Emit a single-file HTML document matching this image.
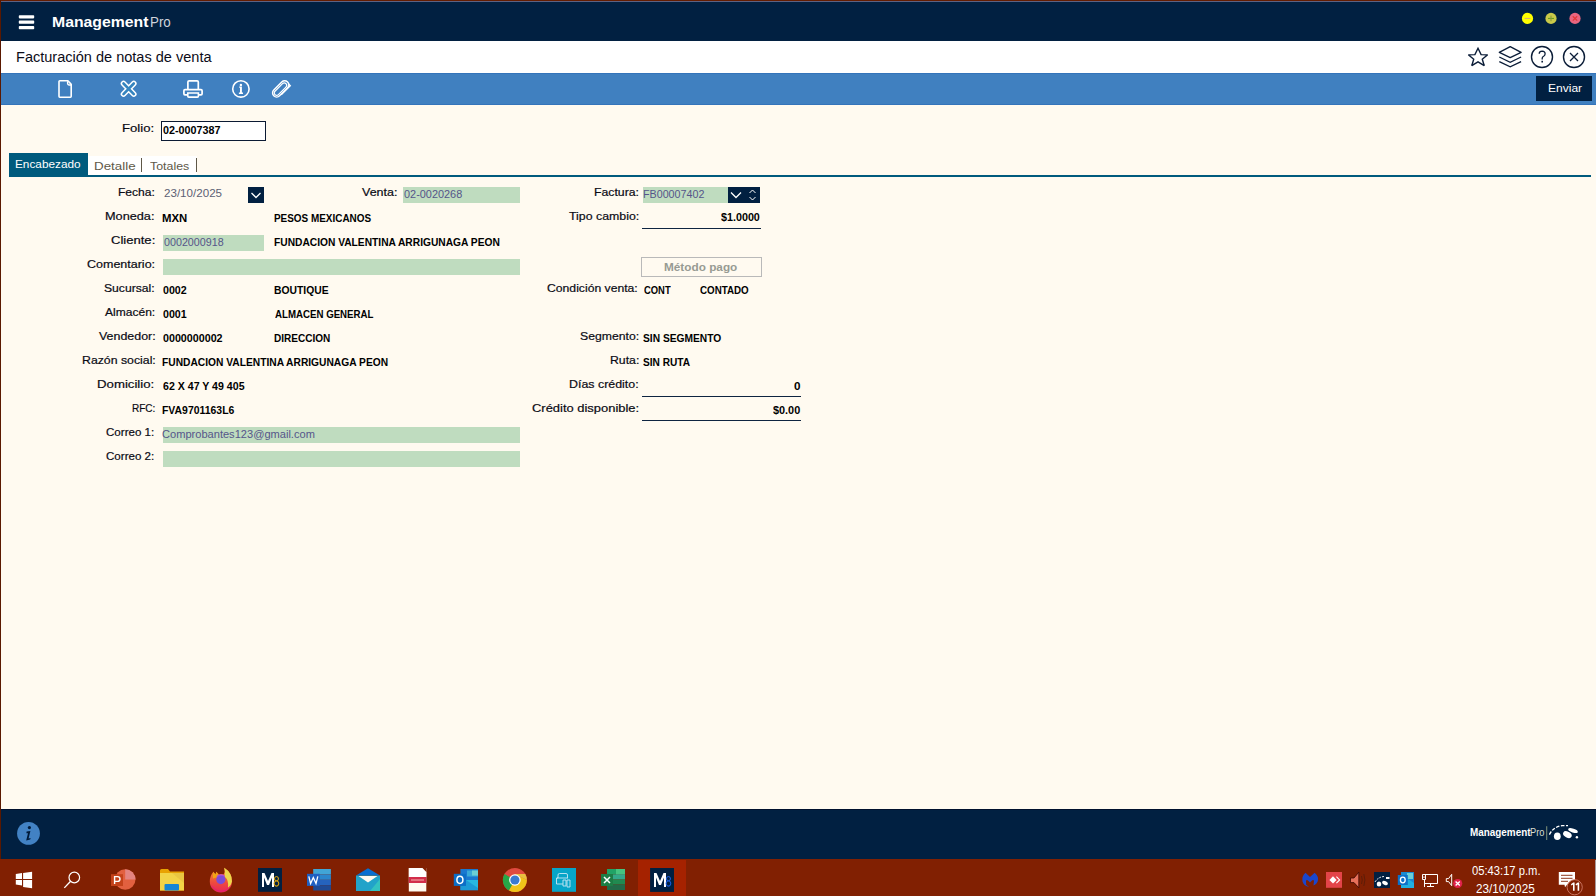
<!DOCTYPE html>
<html><head><meta charset="utf-8"><style>
html,body{margin:0;padding:0;}
body{width:1596px;height:896px;overflow:hidden;position:relative;background:#fffaf0;font-family:'Liberation Sans', sans-serif;}
.r{position:absolute;}
.t{position:absolute;white-space:nowrap;transform-origin:0 0;}
</style></head><body>
<div class="r" style="left:0px;top:0px;width:1596px;height:41px;background:#012041;"></div>
<div class="r" style="left:0px;top:0px;width:1596px;height:1px;background:#641c00;"></div>
<div class="r" style="left:0px;top:1px;width:1596px;height:1px;background:#5d6283;"></div>
<div class="r" style="left:0px;top:41px;width:1596px;height:32px;background:#ffffff;"></div>
<div class="r" style="left:0px;top:73px;width:1596px;height:32px;background:#4080c0;"></div>
<div class="r" style="left:0px;top:73px;width:1596px;height:1px;background:#3474ba;"></div>
<div class="r" style="left:0px;top:104px;width:1596px;height:1px;background:#3474ba;"></div>
<div class="r" style="left:0px;top:809px;width:1596px;height:50px;background:#012041;"></div>
<div class="r" style="left:0px;top:809px;width:1596px;height:1px;background:#00102e;"></div>
<div class="r" style="left:0px;top:859px;width:1596px;height:37px;background:#812002;"></div>
<div class="r" style="left:0px;top:0px;width:1px;height:859px;background:#5a1800;"></div>
<div class="r" style="left:638px;top:860px;width:48px;height:36px;background:#a52200;"></div>
<div class="r" style="left:1536px;top:76px;width:56px;height:25px;background:#012041;"></div>
<div class="r" style="left:161px;top:121px;width:105px;height:20px;background:#ffffff;box-sizing:border-box;border:1px solid #0b1a33;"></div>
<div class="r" style="left:88px;top:156px;width:109px;height:19px;background:#ffffff;"></div>
<div class="r" style="left:9px;top:153px;width:79px;height:22px;background:#005a7d;"></div>
<div class="r" style="left:9px;top:175px;width:1582px;height:2px;background:#005a7d;"></div>
<div class="r" style="left:141px;top:158px;width:1px;height:14px;background:#5e5848;"></div>
<div class="r" style="left:196px;top:158px;width:1px;height:14px;background:#5e5848;"></div>
<div class="r" style="left:403px;top:187px;width:117px;height:16px;background:#bfdcbf;"></div>
<div class="r" style="left:643px;top:187px;width:85px;height:16px;background:#bfdcbf;"></div>
<div class="r" style="left:163px;top:235px;width:101px;height:16px;background:#bfdcbf;"></div>
<div class="r" style="left:163px;top:259px;width:357px;height:16px;background:#bfdcbf;"></div>
<div class="r" style="left:163px;top:427px;width:357px;height:16px;background:#bfdcbf;"></div>
<div class="r" style="left:163px;top:451px;width:357px;height:16px;background:#bfdcbf;"></div>
<div class="r" style="left:248px;top:187px;width:16px;height:16px;background:#012041;"></div>
<svg class="r" style="left:248px;top:187px" width="16" height="16"><polyline points="3.5,6 8,10.5 12.5,6" fill="none" stroke="#fff" stroke-width="1.3"/></svg>
<div class="r" style="left:728px;top:187px;width:32px;height:16px;background:#012041;"></div>
<svg class="r" style="left:728px;top:187px" width="32" height="16"><polyline points="3,5.5 8,10.5 13,5.5" fill="none" stroke="#fff" stroke-width="1.3"/><polyline points="21.5,6 24.5,3 27.5,6" fill="none" stroke="#fff" stroke-width="1"/><polyline points="21.5,10 24.5,13 27.5,10" fill="none" stroke="#fff" stroke-width="1"/></svg>
<div class="r" style="left:642px;top:228px;width:119px;height:1px;background:#0e2440;"></div>
<div class="r" style="left:642px;top:396px;width:159px;height:1px;background:#0e2440;"></div>
<div class="r" style="left:642px;top:420px;width:159px;height:1px;background:#0e2440;"></div>
<div class="r" style="left:641px;top:257px;width:121px;height:20px;background:transparent;box-sizing:border-box;border:1px solid #b9b9b9;"></div>
<svg class="r" style="left:0;top:0" width="1596" height="896" viewBox="0 0 1596 896"><rect x="18.8" y="15.2" width="15.4" height="3.2" rx="0.8" fill="#fff"/><rect x="18.8" y="20.6" width="15.4" height="3.2" rx="0.8" fill="#fff"/><rect x="18.8" y="26.0" width="15.4" height="3.2" rx="0.8" fill="#fff"/><circle cx="1527.5" cy="18.4" r="5.6" fill="#ffff00"/><rect x="1524.6" y="17.9" width="5.8" height="1.1" fill="#d8b070"/><circle cx="1551" cy="18.4" r="5.6" fill="#c9c949"/><rect x="1548" y="17.9" width="6" height="1.1" fill="#6aa020"/><rect x="1550.45" y="15.6" width="1.1" height="5.6" fill="#8a9a40"/><circle cx="1575" cy="18.4" r="5.6" fill="#e9657f"/><path d="M1572.8,16.2 L1577.2,20.6 M1577.2,16.2 L1572.8,20.6" stroke="#e23a3a" stroke-width="1.3"/><g transform="translate(1478,57.8) scale(0.93) translate(-1478,-57.8)"><path d="M1478,47.6 L1481.3,54.4 L1488.4,54.6 L1482.6,59.3 L1484.7,66.3 L1478,62.2 L1471.3,66.3 L1473.4,59.3 L1467.6,54.6 L1474.7,54.4 Z" fill="none" stroke="#0b1d38" stroke-width="1.5" stroke-linejoin="miter" stroke-miterlimit="2.5"/></g><path d="M1499.3,52.4 L1510.2,46.6 L1521.1,52.4 L1510.2,57.6 Z" fill="none" stroke="#0b1d38" stroke-width="1.3" stroke-linejoin="round"/><path d="M1499.3,57.0 L1510.2,62.3 L1521.1,57.0 M1499.3,61.6 L1510.2,66.9 L1521.1,61.6" fill="none" stroke="#0b1d38" stroke-width="1.3"/><circle cx="1542" cy="57" r="10.5" fill="none" stroke="#0b1d38" stroke-width="1.4"/><path d="M1539.2,53.8 Q1539.3,51.2 1542.2,51.2 Q1545.2,51.3 1545.1,53.9 Q1545,55.6 1543.3,56.5 Q1542.2,57.1 1542.2,58.6 L1542.2,59.4" fill="none" stroke="#0b1d38" stroke-width="1.3"/><rect x="1541.4" y="60.8" width="1.6" height="1.7" fill="#0b1d38"/><circle cx="1574" cy="57" r="10.5" fill="none" stroke="#0b1d38" stroke-width="1.4"/><path d="M1570,53 L1578,61 M1578,53 L1570,61" stroke="#0b1d38" stroke-width="1.3"/><path d="M59,81.6 Q59,80.8 59.8,80.8 L67.9,80.8 L71.2,84.4 L71.2,96.3 Q71.2,97.2 70.4,97.2 L59.8,97.2 Q59,97.2 59,96.3 Z" fill="none" stroke="#fff" stroke-width="1.6" stroke-linejoin="round"/><path d="M67.6,81.2 L67.6,83.6 Q67.6,85 69,85 L71,85" fill="none" stroke="#fff" stroke-width="1.4"/><path d="M123.5,83.5 L133.8,94.1 M133.8,83.5 L123.5,94.1" stroke="#fff" stroke-width="5.6" stroke-linecap="round"/><path d="M123.5,83.5 L133.8,94.1 M133.8,83.5 L123.5,94.1" stroke="#3584bf" stroke-width="2.6" stroke-linecap="round"/><path d="M187.9,89 L187.9,82 Q187.9,80.8 189.1,80.8 L197.1,80.8 Q198.3,80.8 198.3,82 L198.3,89" fill="none" stroke="#fff" stroke-width="1.7"/><path d="M188,89.6 L185,89.6 Q183.9,89.6 183.9,90.8 L183.9,93.8 Q183.9,94.8 185,94.8 L188,94.8 M198.2,89.6 L201,89.6 Q202.1,89.6 202.1,90.8 L202.1,93.8 Q202.1,94.8 201,94.8 L198.2,94.8 M188,89.6 L198.2,89.6" fill="none" stroke="#fff" stroke-width="1.7"/><path d="M187.8,93 L198.4,93 L198.4,96.2 Q198.4,97.1 197.4,97.1 L188.8,97.1 Q187.8,97.1 187.8,96.2 Z" fill="none" stroke="#fff" stroke-width="1.6"/><circle cx="240.9" cy="88.9" r="8.2" fill="none" stroke="#fff" stroke-width="1.6"/><circle cx="240.9" cy="84.9" r="1.2" fill="#fff"/><path d="M239.2,86.6 L241.9,86.6 L241.9,92.6 L243,92.6 L243,93.9 L238.9,93.9 L238.9,92.6 L240,92.6 L240,87.7 L239.2,87.7 Z" fill="#fff"/><g transform="translate(281,88.9) rotate(-45)" fill="none" stroke="#fff"><rect x="-10" y="-4.3" width="19.5" height="8.2" rx="4.1" stroke-width="1.5"/><rect x="-8.3" y="-2.6" width="15.5" height="4.8" rx="2.4" stroke-width="1.2"/><path d="M-4,4.3 L8.8,4.3 L8.8,2" stroke-width="1.4"/></g><circle cx="28.5" cy="833.4" r="11.4" fill="#4282c4"/><circle cx="29.4" cy="827.6" r="1.6" fill="#001a38"/><path d="M26.6,831.6 L30.4,831 L28.6,838.6 L30.6,838 L30.2,839.6 L26.2,840.4 L28,833.2 L26.4,833.2 Z" fill="#001a38"/><rect x="1546.3" y="826.2" width="0.9" height="13.8" fill="#8fa080"/><g fill="#fff"><ellipse cx="1557.3" cy="836.3" rx="3.4" ry="3.8"/><ellipse cx="1567.4" cy="834.6" rx="4.6" ry="2.9" transform="rotate(28 1567.4 834.6)"/><ellipse cx="1573" cy="830.6" rx="5" ry="1.9" transform="rotate(18 1573 830.6)"/><circle cx="1576.9" cy="837.3" r="1.2"/></g><path d="M1549.4,834.6 Q1553,827 1562,825.6 L1568,825.6" fill="none" stroke="#fff" stroke-width="1.3" stroke-dasharray="3.5 1.5"/><path d="M15.8,873.9 L22,873 L22,878.9 L15.8,878.9 Z M23.1,872.9 L32.1,871.7 L32.1,878.9 L23.1,878.9 Z M15.8,880 L22,880 L22,885.5 L15.8,884.6 Z M23.1,880 L32.1,880 L32.1,888.2 L23.1,887 Z" fill="#fff"/><circle cx="74.3" cy="877.5" r="5.3" fill="none" stroke="#fff" stroke-width="1.2"/><path d="M70.6,881.3 L64.3,887.9" stroke="#fff" stroke-width="1.3"/><circle cx="125.2" cy="879.5" r="10.3" fill="#e2603f"/><path d="M125.2,879.5 L125.2,869.2 A10.3,10.3 0 0 1 135.5,879.5 Z" fill="#e48480"/><rect x="111" y="874.2" width="12" height="11.8" fill="#c4421a"/><path d="M114.6,884 L114.6,876.6 L117.6,876.6 Q120,876.6 120,879 Q120,881.4 117.6,881.4 L114.6,881.4" fill="none" stroke="#fff" stroke-width="1.4"/><path d="M160,870.5 Q160,869 161.5,869 L168,869 L170,871.5 L184,871.5 L184,890.5 L160,890.5 Z" fill="#e8a202"/><rect x="160" y="873" width="24" height="17.5" fill="#f2d347"/><path d="M160,873 L172,873 L184,883 L184,873 Z" fill="#e6c040" opacity="0.7"/><rect x="164.5" y="884" width="14.5" height="6.5" rx="1" fill="#1585d4"/><defs><linearGradient id="ffg" x1="0" y1="0" x2="0" y2="1"><stop offset="0" stop-color="#f59a2a"/><stop offset="0.6" stop-color="#ee4a3e"/><stop offset="1" stop-color="#e8245a"/></linearGradient></defs><path d="M209.8,881.5 A11.1,11.1 0 0 0 232,881.5 Q232.2,873 224.2,867.8 Q225.5,872 223.5,874.5 Q221,873.6 219,874.6 L216.4,871.8 L215.4,874.6 L213.4,871.8 Q209.8,876 209.8,881.5 Z" fill="url(#ffg)"/><path d="M224.2,867.8 Q232.2,873 232,881.5 Q231,886 228,888 Q229,880 224.5,876.5 Q225.6,872 224.2,867.8 Z" fill="#ecd84a"/><path d="M213.4,871.8 L215.4,874.6 L216.4,871.8 L219.4,876.6 L213,878.6 Q212.6,875 213.4,871.8 Z" fill="#f2a414"/><circle cx="220.8" cy="879.6" r="4.6" fill="#7b4ed6"/><path d="M217,876.5 Q220,873.6 224.5,876" fill="none" stroke="#b04ad8" stroke-width="1.4"/><path d="M211.5,886 Q216,891.5 221,891.3 Q226,891.5 230,887" fill="none" stroke="#e01c78" stroke-width="0.9"/><rect x="258" y="868" width="24" height="23.8" fill="#012041"/><path d="M262,887 L262,873 L264.5,873 L268,881 L271.5,873 L274,873 L274,887 L272,887 L272,877.5 L269,885 L267,885 L264,877.5 L264,887 Z" fill="#fff"/><path d="M276.4,876.5 a2,2.2 0 1 0 0.1,0 M276.4,880.9 a2.3,2.6 0 1 0 0.1,0" fill="none" stroke="#d6a010" stroke-width="1.1"/><rect x="313.2" y="869" width="17.7" height="5.4" fill="#41a5d6"/><rect x="313.2" y="874.4" width="17.7" height="5.4" fill="#2b86cc"/><rect x="313.2" y="879.8" width="17.7" height="5.4" fill="#2563bd"/><rect x="313.2" y="885.2" width="17.7" height="5.3" fill="#1f4a94"/><rect x="307" y="873.8" width="12.7" height="12.1" fill="#1f5fc2"/><path d="M308.8,876.4 L310.6,883.6 L313.3,877.6 L316,883.6 L317.8,876.4" fill="none" stroke="#fff" stroke-width="1.3"/><path d="M356,875.5 L368,868.3 L380,875.5 Z" fill="#0a6fd0"/><rect x="356" y="875.5" width="24" height="15.5" fill="#22a3c9"/><path d="M380,879 L380,891 L370,891 Z" fill="#33c2c0"/><path d="M358.5,876 L377.5,876 L368,882.6 Z" fill="#fffaf0"/><path d="M408.8,868.1 L422.5,868.1 L426.3,872 L426.3,891.4 L408.8,891.4 Z" fill="#fffaf0"/><rect x="408.8" y="868.1" width="17.5" height="8.9" fill="#ffffff"/><path d="M422.5,868.1 L426.3,872 L426.3,868.1 Z" fill="#812002"/><rect x="408.8" y="877" width="17.5" height="6" fill="#d22d4a"/><rect x="411" y="879.4" width="13" height="1.2" fill="#f0a0a0"/><rect x="460.4" y="869" width="17.6" height="21.2" fill="#1a78d0"/><rect x="467" y="870.5" width="11" height="6" fill="#38a8d8"/><rect x="472" y="870.5" width="6" height="5" fill="#6ccfd4"/><path d="M460.4,880 L478,880 L478,890.2 L460.4,890.2 Z" fill="#1c9ad6"/><path d="M466,880 L478,888 L478,880 Z" fill="#28b8e0"/><rect x="453.8" y="873.8" width="12.2" height="12.1" fill="#0c6ec6"/><ellipse cx="459.9" cy="879.8" rx="3" ry="3.6" fill="none" stroke="#fff" stroke-width="1.5"/><circle cx="514.9" cy="880" r="12" fill="#e04a3f"/><path d="M514.9,880 L504.5,874 A12,12 0 0 0 509,890.5 Z" fill="#27a847"/><path d="M514.9,880 L509,890.5 A12,12 0 0 0 526.9,880 L514.9,874 Z" fill="#f0c419"/><path d="M514.9,874 L525.3,874 A12,12 0 0 1 526.9,880 Z" fill="#e8c040"/><circle cx="514.9" cy="880" r="5.8" fill="#fff"/><circle cx="514.9" cy="880" r="4.6" fill="#3a7ad0"/><rect x="552" y="868" width="24" height="23.8" fill="#07a5c8"/><path d="M558,878 L558,875 Q558,873.5 559.5,873.5 L566,873.5 Q567.5,873.5 567.5,875 L567.5,878 M557,878 L568,878 M558,878 L556.5,878 L556.5,884 L563,884 M563,880 L566,880 L566,886 L563,886 Z M567,880 L570,880 L570,887 L567,887 Z" fill="none" stroke="#c8e8f4" stroke-width="0.9"/><rect x="607" y="869" width="18" height="5.5" fill="#21a366"/><rect x="616" y="869" width="9" height="5.5" fill="#45c480"/><rect x="607" y="874.5" width="18" height="5" fill="#33a98a"/><rect x="607" y="879.5" width="18" height="5" fill="#208a50"/><rect x="607" y="884.5" width="18" height="5.5" fill="#226a48"/><rect x="601" y="874" width="12" height="12" fill="#1d7d45"/><path d="M604,877 L610,883 M610,877 L604,883" stroke="#fff" stroke-width="1.5"/><rect x="650.1" y="868" width="23.9" height="23.9" fill="#012041"/><path d="M654,887 L654,873 L656.5,873 L660,881 L663.5,873 L666,873 L666,887 L664,887 L664,877.5 L661,885 L659,885 L656,877.5 L656,887 Z" fill="#fff"/><path d="M668.4,876.5 a2,2.2 0 1 0 0.1,0 M668.4,880.9 a2.3,2.6 0 1 0 0.1,0" fill="none" stroke="#1a5ad8" stroke-width="1.1"/><path d="M1305.5,872.7 L1310,877.1 L1314.6,872.7 Q1318.6,876 1318,880 Q1317.5,884 1313.5,885.4 L1314,880.6 Q1313,879.6 1312,880.6 L1310,882.6 L1308,880.6 Q1307,879.6 1306,880.6 L1306.2,884.8 Q1307.8,886 1309.2,887 Q1304,886.2 1302.5,881.5 Q1301.6,876 1305.5,872.7 Z" fill="#1a46cc"/><rect x="1326" y="872" width="16" height="15.8" fill="#e34448"/><path d="M1329.4,879.9 L1333,876.3 L1336.6,879.9 L1333,883.5 Z" fill="#fff"/><path d="M1336.4,876.6 L1339.6,879.9 L1336.4,883.2" fill="none" stroke="#fff" stroke-width="1.1"/><path d="M1350.5,878 L1354,878 L1358.8,872.2 L1358.8,887.8 L1354,882.6 L1350.5,882.6 Z" fill="#e6705a" stroke="#3a0800" stroke-width="0.8"/><path d="M1361.5,876 Q1363,880 1361.5,884 M1363.8,874 Q1366,880 1363.8,886" fill="none" stroke="#5a1c08" stroke-width="0.9"/><rect x="1374" y="872" width="16" height="16" fill="#012041"/><g fill="#fff"><ellipse cx="1379" cy="884" rx="2.3" ry="2.5"/><ellipse cx="1385" cy="883" rx="3" ry="1.9" transform="rotate(25 1385 883)"/><rect x="1386" y="877" width="3.5" height="2" /></g><path d="M1375,882 Q1378,877 1384,876.5" fill="none" stroke="#fff" stroke-width="0.9" stroke-dasharray="2 1"/><rect x="1401" y="872" width="13" height="16" fill="#1a8ad0"/><rect x="1407" y="873" width="6" height="6" fill="#6ccfd4"/><path d="M1408,879 L1414,883 L1414,888 L1401,888 L1401,881 Z" fill="#22b0e0"/><rect x="1397.8" y="875" width="10" height="10" fill="#0c70c8"/><ellipse cx="1402.8" cy="880" rx="2.4" ry="2.8" fill="none" stroke="#fff" stroke-width="1.3"/><path d="M1422.5,874.5 L1437.5,874.5 L1437.5,883.5 L1424.5,883.5 M1422.5,874.5 L1422.5,879.5 L1425.5,879.5 L1425.5,874.5 M1424.5,879.5 L1424.5,887 M1430.5,883.5 L1430.5,886.5 M1427,886.5 L1434,886.5 M1423.3,876.6 L1424,877.6 L1424.7,876.6" fill="none" stroke="#fff" stroke-width="1"/><path d="M1446.3,878.6 L1448.6,878.6 L1451.7,874.3 L1451.7,885.7 L1448.6,881.6 L1446.3,881.6 Z" fill="none" stroke="#fff" stroke-width="1"/><circle cx="1457.7" cy="883.5" r="4.6" fill="#e0204a"/><path d="M1455.6,881.4 L1459.8,885.6 M1459.8,881.4 L1455.6,885.6" stroke="#fff" stroke-width="1.35"/><path d="M1558.8,872 L1575,872 L1575,884.8 L1567,884.8 L1565,887.2 L1564.5,884.8 L1558.8,884.8 Z" fill="#fff"/><path d="M1561,875.3 L1572.5,875.3 M1561,878.3 L1572.5,878.3 M1561,881.3 L1568,881.3" stroke="#812002" stroke-width="0.9"/><circle cx="1574.7" cy="887.25" r="7.6" fill="#812002" stroke="#d07a68" stroke-width="0.9"/><path d="M1570.9,884.2 L1573.2,882.4 L1574.6,882.4 L1574.6,890.8 L1573,890.8 L1573,884.6 L1571.6,885.6 Z M1575.5,884.2 L1577.8,882.4 L1579.2,882.4 L1579.2,890.8 L1577.6,890.8 L1577.6,884.6 L1576.2,885.6 Z" fill="#fff"/><rect x="1595" y="860" width="1" height="36" fill="#a8989a"/></svg>
<div class="t" style="left:51.55px;top:14px;font-size:15px;line-height:15px;font-weight:bold;color:#ffffff;transform:scaleX(1.0527);">Management</div>
<div class="t" style="left:149.51px;top:14px;font-size:15px;line-height:15px;font-weight:normal;color:#d0d4dc;transform:scaleX(0.8909);">Pro</div>
<div class="t" style="left:16.16px;top:50px;font-size:14px;line-height:14px;font-weight:normal;color:#0c0c18;transform:scaleX(1.0380);">Facturación de notas de venta</div>
<div class="t" style="left:1547.55px;top:83px;font-size:11.5px;line-height:11.5px;font-weight:normal;color:#ffffff;transform:scaleX(1.0452);">Enviar</div>
<div class="t" style="left:122.33px;top:123px;font-size:11.2px;line-height:11.2px;font-weight:normal;color:#0a0a14;transform:scaleX(1.1731);-webkit-text-stroke:0.2px #0a0a14;">Folio:</div>
<div class="t" style="left:163.30px;top:125px;font-size:11px;line-height:11px;font-weight:bold;color:#000000;transform:scaleX(0.9776);">02-0007387</div>
<div class="t" style="left:15.20px;top:159px;font-size:11.2px;line-height:11.2px;font-weight:normal;color:#ffffff;transform:scaleX(1.0549);">Encabezado</div>
<div class="t" style="left:94.41px;top:161px;font-size:11.2px;line-height:11.2px;font-weight:normal;color:#5e5848;transform:scaleX(1.1939);">Detalle</div>
<div class="t" style="left:150.00px;top:161px;font-size:11.2px;line-height:11.2px;font-weight:normal;color:#5e5848;transform:scaleX(1.1071);">Totales</div>
<div class="t" style="left:118.42px;top:187px;font-size:11.2px;line-height:11.2px;font-weight:normal;color:#0a0a14;transform:scaleX(1.0781);-webkit-text-stroke:0.2px #0a0a14;">Fecha:</div>
<div class="t" style="left:105.16px;top:211px;font-size:11.2px;line-height:11.2px;font-weight:normal;color:#0a0a14;transform:scaleX(1.1357);-webkit-text-stroke:0.2px #0a0a14;">Moneda:</div>
<div class="t" style="left:110.83px;top:235px;font-size:11.2px;line-height:11.2px;font-weight:normal;color:#0a0a14;transform:scaleX(1.1667);-webkit-text-stroke:0.2px #0a0a14;">Cliente:</div>
<div class="t" style="left:86.98px;top:259px;font-size:11.2px;line-height:11.2px;font-weight:normal;color:#0a0a14;transform:scaleX(1.1169);-webkit-text-stroke:0.2px #0a0a14;">Comentario:</div>
<div class="t" style="left:104.01px;top:283px;font-size:11.2px;line-height:11.2px;font-weight:normal;color:#0a0a14;transform:scaleX(1.0867);-webkit-text-stroke:0.2px #0a0a14;">Sucursal:</div>
<div class="t" style="left:104.50px;top:307px;font-size:11.2px;line-height:11.2px;font-weight:normal;color:#0a0a14;transform:scaleX(1.0761);-webkit-text-stroke:0.2px #0a0a14;">Almacén:</div>
<div class="t" style="left:98.50px;top:331px;font-size:11.2px;line-height:11.2px;font-weight:normal;color:#0a0a14;transform:scaleX(1.1100);-webkit-text-stroke:0.2px #0a0a14;">Vendedor:</div>
<div class="t" style="left:81.50px;top:355px;font-size:11.2px;line-height:11.2px;font-weight:normal;color:#0a0a14;transform:scaleX(1.0985);-webkit-text-stroke:0.2px #0a0a14;">Razón social:</div>
<div class="t" style="left:97.32px;top:379px;font-size:11.2px;line-height:11.2px;font-weight:normal;color:#0a0a14;transform:scaleX(1.1809);-webkit-text-stroke:0.2px #0a0a14;">Domicilio:</div>
<div class="t" style="left:131.60px;top:403px;font-size:11.2px;line-height:11.2px;font-weight:normal;color:#0a0a14;transform:scaleX(0.8958);-webkit-text-stroke:0.2px #0a0a14;">RFC:</div>
<div class="t" style="left:106.47px;top:427px;font-size:11.2px;line-height:11.2px;font-weight:normal;color:#0a0a14;transform:scaleX(1.0333);-webkit-text-stroke:0.2px #0a0a14;">Correo 1:</div>
<div class="t" style="left:106.47px;top:451px;font-size:11.2px;line-height:11.2px;font-weight:normal;color:#0a0a14;transform:scaleX(1.0333);-webkit-text-stroke:0.2px #0a0a14;">Correo 2:</div>
<div class="t" style="left:163.96px;top:188px;font-size:11.2px;line-height:11.2px;font-weight:normal;color:#5d5f74;transform:scaleX(1.0364);">23/10/2025</div>
<div class="t" style="left:162.25px;top:213px;font-size:10.8px;line-height:10.8px;font-weight:bold;color:#000000;transform:scaleX(1.0522);">MXN</div>
<div class="t" style="left:274.18px;top:213px;font-size:10.8px;line-height:10.8px;font-weight:bold;color:#000000;transform:scaleX(0.9192);">PESOS MEXICANOS</div>
<div class="t" style="left:163.50px;top:237px;font-size:11.2px;line-height:11.2px;font-weight:normal;color:#55558a;transform:scaleX(0.9581);">0002000918</div>
<div class="t" style="left:274.05px;top:237px;font-size:10.8px;line-height:10.8px;font-weight:bold;color:#000000;transform:scaleX(0.9468);">FUNDACION VALENTINA ARRIGUNAGA PEON</div>
<div class="t" style="left:163.20px;top:285px;font-size:10.8px;line-height:10.8px;font-weight:bold;color:#000000;transform:scaleX(0.9875);">0002</div>
<div class="t" style="left:274.04px;top:285px;font-size:10.8px;line-height:10.8px;font-weight:bold;color:#000000;transform:scaleX(0.9571);">BOUTIQUE</div>
<div class="t" style="left:163.20px;top:309px;font-size:10.8px;line-height:10.8px;font-weight:bold;color:#000000;transform:scaleX(0.9875);">0001</div>
<div class="t" style="left:275.00px;top:309px;font-size:10.8px;line-height:10.8px;font-weight:bold;color:#000000;transform:scaleX(0.8973);">ALMACEN GENERAL</div>
<div class="t" style="left:163.20px;top:333px;font-size:10.8px;line-height:10.8px;font-weight:bold;color:#000000;transform:scaleX(0.9917);">0000000002</div>
<div class="t" style="left:274.07px;top:333px;font-size:10.8px;line-height:10.8px;font-weight:bold;color:#000000;transform:scaleX(0.9288);">DIRECCION</div>
<div class="t" style="left:162.25px;top:357px;font-size:10.8px;line-height:10.8px;font-weight:bold;color:#000000;transform:scaleX(0.9477);">FUNDACION VALENTINA ARRIGUNAGA PEON</div>
<div class="t" style="left:163.20px;top:381px;font-size:10.8px;line-height:10.8px;font-weight:bold;color:#000000;transform:scaleX(0.9819);">62 X 47 Y 49 405</div>
<div class="t" style="left:162.23px;top:405px;font-size:10.8px;line-height:10.8px;font-weight:bold;color:#000000;transform:scaleX(0.9662);">FVA9701163L6</div>
<div class="t" style="left:162.21px;top:429px;font-size:11.2px;line-height:11.2px;font-weight:normal;color:#55558a;transform:scaleX(0.9902);">Comprobantes123@gmail.com</div>
<div class="t" style="left:362.20px;top:187px;font-size:11.2px;line-height:11.2px;font-weight:normal;color:#0a0a14;transform:scaleX(1.1161);-webkit-text-stroke:0.2px #0a0a14;">Venta:</div>
<div class="t" style="left:403.50px;top:189px;font-size:11.2px;line-height:11.2px;font-weight:normal;color:#55558a;transform:scaleX(0.9746);">02-0020268</div>
<div class="t" style="left:593.71px;top:187px;font-size:11.2px;line-height:11.2px;font-weight:normal;color:#0a0a14;transform:scaleX(1.0949);-webkit-text-stroke:0.2px #0a0a14;">Factura:</div>
<div class="t" style="left:643.04px;top:189px;font-size:11.2px;line-height:11.2px;font-weight:normal;color:#55558a;transform:scaleX(0.9581);">FB00007402</div>
<div class="t" style="left:568.50px;top:211px;font-size:11.2px;line-height:11.2px;font-weight:normal;color:#0a0a14;transform:scaleX(1.1032);-webkit-text-stroke:0.2px #0a0a14;">Tipo cambio:</div>
<div class="t" style="left:721.00px;top:212px;font-size:10.8px;line-height:10.8px;font-weight:bold;color:#000000;transform:scaleX(0.9949);">$1.0000</div>
<div class="t" style="left:663.95px;top:262px;font-size:11.2px;line-height:11.2px;font-weight:bold;color:#979b93;transform:scaleX(1.0529);">Método pago</div>
<div class="t" style="left:547.11px;top:283px;font-size:11.2px;line-height:11.2px;font-weight:normal;color:#0a0a14;transform:scaleX(1.0890);-webkit-text-stroke:0.2px #0a0a14;">Condición venta:</div>
<div class="t" style="left:643.50px;top:285px;font-size:10.8px;line-height:10.8px;font-weight:bold;color:#000000;transform:scaleX(0.8710);">CONT</div>
<div class="t" style="left:699.50px;top:285px;font-size:10.8px;line-height:10.8px;font-weight:bold;color:#000000;transform:scaleX(0.9056);">CONTADO</div>
<div class="t" style="left:580.01px;top:331px;font-size:11.2px;line-height:11.2px;font-weight:normal;color:#0a0a14;transform:scaleX(1.0942);-webkit-text-stroke:0.2px #0a0a14;">Segmento:</div>
<div class="t" style="left:643.10px;top:333px;font-size:10.8px;line-height:10.8px;font-weight:bold;color:#000000;transform:scaleX(0.9476);">SIN SEGMENTO</div>
<div class="t" style="left:609.50px;top:355px;font-size:11.2px;line-height:11.2px;font-weight:normal;color:#0a0a14;transform:scaleX(1.0960);-webkit-text-stroke:0.2px #0a0a14;">Ruta:</div>
<div class="t" style="left:643.10px;top:357px;font-size:10.8px;line-height:10.8px;font-weight:bold;color:#000000;transform:scaleX(0.9380);">SIN RUTA</div>
<div class="t" style="left:569.29px;top:379px;font-size:11.2px;line-height:11.2px;font-weight:normal;color:#0a0a14;transform:scaleX(1.1082);-webkit-text-stroke:0.2px #0a0a14;">Días crédito:</div>
<div class="t" style="left:793.50px;top:381px;font-size:10.8px;line-height:10.8px;font-weight:bold;color:#000000;transform:scaleX(1.0833);">0</div>
<div class="t" style="left:531.64px;top:403px;font-size:11.2px;line-height:11.2px;font-weight:normal;color:#0a0a14;transform:scaleX(1.1560);-webkit-text-stroke:0.2px #0a0a14;">Crédito disponible:</div>
<div class="t" style="left:772.80px;top:405px;font-size:10.8px;line-height:10.8px;font-weight:bold;color:#000000;transform:scaleX(1.0074);">$0.00</div>
<div class="t" style="left:1470.10px;top:827px;font-size:11px;line-height:11px;font-weight:bold;color:#ffffff;transform:scaleX(0.9000);">Management</div>
<div class="t" style="left:1530.36px;top:827px;font-size:11px;line-height:11px;font-weight:normal;color:#d8dcd0;transform:scaleX(0.8438);">Pro</div>
<div class="t" style="left:1472.40px;top:865px;font-size:12.5px;line-height:12.5px;font-weight:normal;color:#ffffff;transform:scaleX(0.8961);">05:43:17 p.m.</div>
<div class="t" style="left:1476.06px;top:883px;font-size:12.5px;line-height:12.5px;font-weight:normal;color:#ffffff;transform:scaleX(0.9377);">23/10/2025</div>
</body></html>
